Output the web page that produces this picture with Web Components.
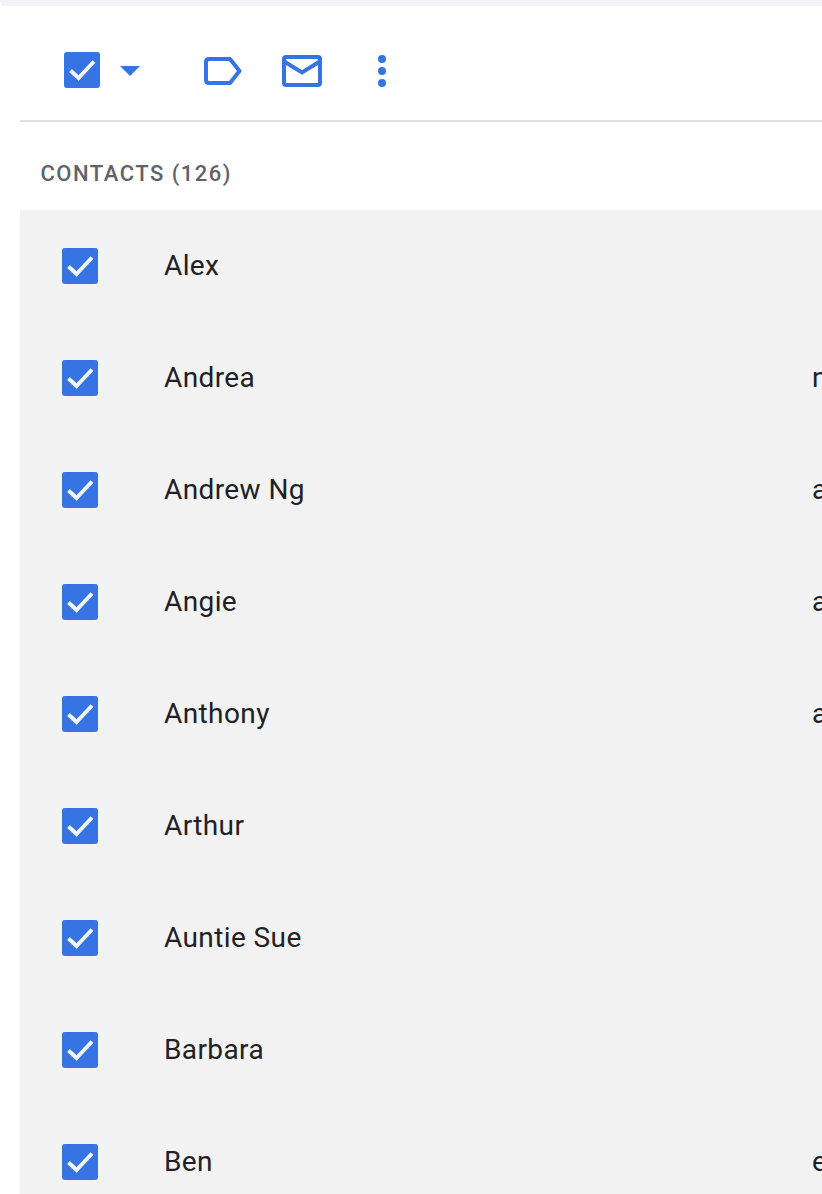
<!DOCTYPE html>
<html>
<head>
<meta charset="utf-8">
<title>Contacts</title>
<style>
  html, body { margin: 0; height: 1194px; overflow: hidden; background: #fff; }
  body { font-family: Roboto, "Liberation Sans", sans-serif; }
</style>
</head>
<body>
<contacts-page>
  <contact-row name="Alex"></contact-row>
  <contact-row name="Andrea" email="nicole@example.com"></contact-row>
  <contact-row name="Andrew Ng" email="andrew@example.com"></contact-row>
  <contact-row name="Angie" email="angie@example.com"></contact-row>
  <contact-row name="Anthony" email="anthony@example.com"></contact-row>
  <contact-row name="Arthur"></contact-row>
  <contact-row name="Auntie Sue"></contact-row>
  <contact-row name="Barbara"></contact-row>
  <contact-row name="Ben" email="elliot@example.com"></contact-row>
</contacts-page>
<script>
const checkSvg = `
  <svg viewBox="0 0 36 36" width="36" height="36" aria-hidden="true">
    <rect width="36" height="36" rx="3" fill="#3574e2"/>
    <path d="M6.5 18.5 L14.5 26 L30 9.5" fill="none" stroke="#f4f6fb" stroke-width="4"/>
  </svg>`;

class BlueCheck extends HTMLElement {
  constructor() {
    super();
    this.attachShadow({ mode: 'open' });
    this.shadowRoot.innerHTML = `
      <style>
        :host { display: block; width: 36px; height: 36px; flex: none; }
        svg { display: block; }
      </style>
      ${checkSvg}`;
  }
}
customElements.define('blue-check', BlueCheck);

class ContactsToolbar extends HTMLElement {
  constructor() {
    super();
    this.attachShadow({ mode: 'open' });
    this.shadowRoot.innerHTML = `
      <style>
        :host {
          display: flex;
          align-items: center;
          box-sizing: border-box;
          height: 116px;
          margin-left: 20px;
          padding: 14px 0 0 44px;
          border-bottom: 2px solid #e0e0e0;
        }
        svg { display: block; flex: none; margin-top: 2px; }
        .caret { margin-left: 20px; }
        .label { margin-left: 64px; }
        .mail { margin-left: 40px; }
        .more { margin-left: 56px; }
      </style>
      <blue-check></blue-check>
      <svg class="caret" width="20" height="10" viewBox="0 0 20 10"><path d="M0 0H20L10 10Z" fill="#3574e2"/></svg>
      <svg class="label" width="38" height="28" viewBox="0 0 38 28">
        <path d="M5 2H26L35.5 14L26 26H5Q2 26 2 23V5Q2 2 5 2Z" fill="none" stroke="#3574e2" stroke-width="4" stroke-linejoin="round"/>
      </svg>
      <svg class="mail" width="40" height="32" viewBox="0 0 40 32">
        <rect x="2" y="2" width="36" height="28" rx="2" fill="none" stroke="#3574e2" stroke-width="4"/>
        <path d="M3 7L20 17.5L37 7" fill="none" stroke="#3574e2" stroke-width="4"/>
      </svg>
      <svg class="more" width="8" height="32" viewBox="0 0 8 32">
        <circle cx="4" cy="4" r="4" fill="#3574e2"/>
        <circle cx="4" cy="16" r="4" fill="#3574e2"/>
        <circle cx="4" cy="28" r="4" fill="#3574e2"/>
      </svg>`;
  }
}
customElements.define('contacts-toolbar', ContactsToolbar);

class ContactRow extends HTMLElement {
  constructor() {
    super();
    this.attachShadow({ mode: 'open' });
    this.shadowRoot.innerHTML = `
      <style>
        :host {
          display: grid;
          grid-template-columns: 102px 648px 400px;
          align-items: center;
          height: 112px;
          padding-left: 42px;
          width: 1200px;
          font-size: 28px;
          letter-spacing: 0.4px;
          color: #202124;
        }
        span { white-space: nowrap; margin-top: -1px; }
      </style>
      <blue-check></blue-check>
      <span class="name"></span>
      <span class="email"></span>`;
  }

  connectedCallback() {
    this.shadowRoot.querySelector('.name').textContent = this.getAttribute('name') || '';
    this.shadowRoot.querySelector('.email').textContent = this.getAttribute('email') || '';
  }
}
customElements.define('contact-row', ContactRow);

class ContactsPage extends HTMLElement {
  constructor() {
    super();
    this.attachShadow({ mode: 'open' });
    this.shadowRoot.innerHTML = `
      <style>
        :host { display: block; overflow: hidden; width: 822px; height: 1194px; }
        .search {
          height: 6px;
          background: #f1f3f4;
          border-bottom-left-radius: 16px;
        }
        .heading {
          box-sizing: border-box;
          height: 88px;
          margin-left: 20px;
          padding: 15px 0 0 20.5px;
          display: flex;
          align-items: center;
          font-size: 22px;
          font-weight: 500;
          letter-spacing: 1.5px;
          color: #5f6368;
        }
        .list { margin-left: 20px; background: #f2f2f2; overflow: hidden; }
      </style>
      <div class="search"></div>
      <contacts-toolbar></contacts-toolbar>
      <div class="heading">CONTACTS (126)</div>
      <div class="list"><slot></slot></div>`;
  }
}
customElements.define('contacts-page', ContactsPage);
</script>
</body>
</html>
